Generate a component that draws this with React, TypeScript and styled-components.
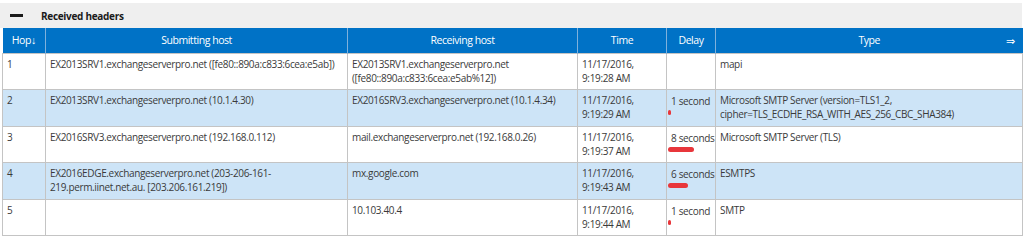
import styled, { createGlobalStyle } from "styled-components";

const GlobalStyle = createGlobalStyle`
  body {
    margin: 0;
    background: #ffffff;
    font-family: "Open Sans", "Noto Sans", sans-serif;
  }
`;

const Panel = styled.section`
  width: 1024px;
  padding-top: 3px;
`;

const SectionBar = styled.div`
  height: 25px;
  margin-right: 2px;
  background: #efefef;
  display: flex;
  align-items: center;
  gap: 18px;
  padding-left: 10px;
`;

const Minus = styled.span`
  width: 13px;
  height: 3px;
  background: #1a1a1a;
`;

const SectionTitle = styled.h2`
  margin: 0;
  font-size: 10px;
  font-weight: 700;
  letter-spacing: -0.3px;
  color: #1a1a1a;
`;

const Table = styled.table`
  margin-left: 2px;
  width: 1020px;
  border-collapse: collapse;
  table-layout: fixed;
  font-size: 10px;
  letter-spacing: -0.35px;
  color: #3a3a3a;
`;

const Th = styled.th`
  box-sizing: border-box;
  height: 25px;
  padding: 0 4px;
  background: #0072c6;
  color: #ffffff;
  font-weight: 400;
  font-size: 10.5px;
  letter-spacing: -0.45px;
  text-align: center;
  border-left: 1px solid #7fb1dc;
  position: relative;
  &:first-child {
    border-left: none;
  }
`;

const Arrow = styled.span`
  position: absolute;
  right: 8px;
  top: 5px;
  font-size: 11px;
`;

const Tr = styled.tr<{ $alt: boolean }>`
  background: ${(p) => (p.$alt ? "#cde4f7" : "#ffffff")};
`;

const Td = styled.td`
  box-sizing: border-box;
  height: 36.6px;
  padding: 3px 4px 0;
  vertical-align: top;
  line-height: 14px;
  border: 1px solid #c4c4c4;
  word-break: break-word;
`;

const DelayCell = styled(Td)`
  padding-top: 4px;
  padding-left: 4px;
  padding-right: 0;
  white-space: nowrap;
`;

const Bar = styled.div`
  margin-top: 2px;
  margin-left: -3px;
  height: 5px;
  border-radius: 3px;
  background: #e8363b;
`;

type Hop = {
  hop: number;
  from: string;
  to: string;
  time: string;
  delay?: number;
  type: string;
};

const hops: Hop[] = [
  {
    hop: 1,
    from: "EX2013SRV1.exchangeserverpro.net ([fe80::890a:c833:6cea:e5ab])",
    to: "EX2013SRV1.exchangeserverpro.net ([fe80::890a:c833:6cea:e5ab%12])",
    time: "11/17/2016, 9:19:28 AM",
    type: "mapi",
  },
  {
    hop: 2,
    from: "EX2013SRV1.exchangeserverpro.net (10.1.4.30)",
    to: "EX2016SRV3.exchangeserverpro.net (10.1.4.34)",
    time: "11/17/2016, 9:19:29 AM",
    delay: 1,
    type: "Microsoft SMTP Server (version=TLS1_2, cipher=TLS_ECDHE_RSA_WITH_AES_256_CBC_SHA384)",
  },
  {
    hop: 3,
    from: "EX2016SRV3.exchangeserverpro.net (192.168.0.112)",
    to: "mail.exchangeserverpro.net (192.168.0.26)",
    time: "11/17/2016, 9:19:37 AM",
    delay: 8,
    type: "Microsoft SMTP Server (TLS)",
  },
  {
    hop: 4,
    from: "EX2016EDGE.exchangeserverpro.net (203-206-161-219.perm.iinet.net.au. [203.206.161.219])",
    to: "mx.google.com",
    time: "11/17/2016, 9:19:43 AM",
    delay: 6,
    type: "ESMTPS",
  },
  {
    hop: 5,
    from: "",
    to: "10.103.40.4",
    time: "11/17/2016, 9:19:44 AM",
    delay: 1,
    type: "SMTP",
  },
];

const widths = [43, 302, 230, 89, 49, 307];

function App() {
  return (
    <Panel>
      <GlobalStyle />
      <SectionBar>
        <Minus />
        <SectionTitle>Received headers</SectionTitle>
      </SectionBar>
      <Table>
        <colgroup>
          {widths.map((w, i) => (
            <col key={i} style={{ width: w }} />
          ))}
        </colgroup>
        <thead>
          <tr>
            <Th>Hop↓</Th>
            <Th>Submitting host</Th>
            <Th>Receiving host</Th>
            <Th>Time</Th>
            <Th>Delay</Th>
            <Th>
              Type<Arrow>⇒</Arrow>
            </Th>
          </tr>
        </thead>
        <tbody>
          {hops.map((h, i) => (
            <Tr key={h.hop} $alt={i % 2 === 1}>
              <Td>{h.hop}</Td>
              <Td>{h.from}</Td>
              <Td>{h.to}</Td>
              <Td>{h.time}</Td>
              <DelayCell>
                {h.delay && (
                  <>
                    {h.delay} {h.delay === 1 ? "second" : "seconds"}
                    <Bar style={{ width: h.delay * 3.3 }} />
                  </>
                )}
              </DelayCell>
              <Td>{h.type}</Td>
            </Tr>
          ))}
        </tbody>
      </Table>
    </Panel>
  );
}

export default App;
